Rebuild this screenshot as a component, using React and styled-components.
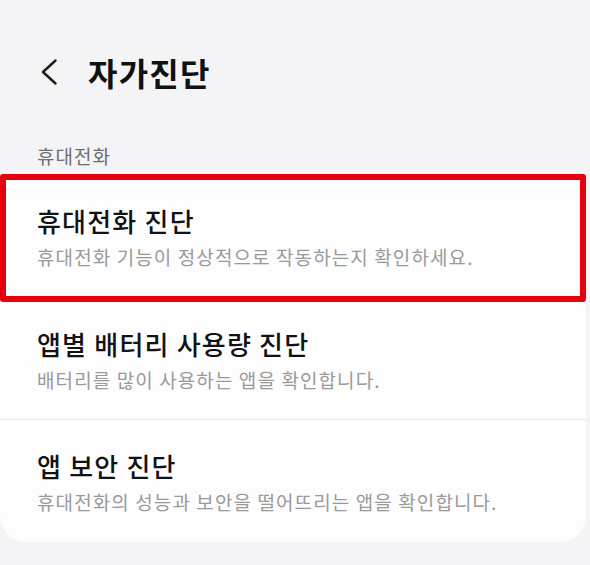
import React from 'react';
import styled, { createGlobalStyle } from 'styled-components';

const GlobalStyle = createGlobalStyle`
  html, body {
    margin: 0;
    padding: 0;
    background: #f4f4f6;
  }
  body {
    font-family: "Noto Sans CJK KR", "Noto Sans", sans-serif;
  }
`;

const Page = styled.div`
  width: 590px;
  height: 565px;
  overflow: hidden;
  background: #f4f4f6;
`;

const Header = styled.header`
  display: flex;
  align-items: center;
  gap: 31px;
  height: 56px;
  padding: 44px 0 0 41px;
`;

const BackButton = styled.button`
  display: flex;
  align-items: center;
  padding: 0;
  border: none;
  background: none;
  color: #1c1c1c;
`;

const Title = styled.h1`
  margin: 0;
  font-size: 32px;
  font-weight: 700;
  letter-spacing: 1.2px;
  color: #111;
`;

const SectionLabel = styled.div`
  margin: 45px 0 8px 37px;
  font-size: 19px;
  line-height: 22px;
  letter-spacing: 1px;
  color: #6e6e6e;
`;

const Card = styled.ul`
  list-style: none;
  margin: 0;
  padding: 0;
  width: 586px;
  background: #fdfdfe;
  border-radius: 0 0 26px 26px;
`;

const Item = styled.li`
  position: relative;
  padding: 31px 20px 28.5px 37px;
  border-top: ${p => (p.$first ? 'none' : '1.5px solid #e7e7ea')};

  &::after {
    content: '';
    display: ${p => (p.$highlight ? 'block' : 'none')};
    position: absolute;
    z-index: 1;
    inset: -1px 0 -5px 0;
    border: 6px solid #e8000d;
    border-radius: 3px;
    pointer-events: none;
  }
`;

const ItemTitle = styled.div`
  font-size: 26px;
  line-height: 30px;
  font-weight: 500;
  color: #121212;
  letter-spacing: 1.2px;
`;

const ItemDesc = styled.div`
  margin-top: 10px;
  font-size: 19px;
  line-height: 22px;
  letter-spacing: 1.1px;
  color: #9a9a9a;
`;

const items = [
  { title: '휴대전화 진단', desc: '휴대전화 기능이 정상적으로 작동하는지 확인하세요.', highlight: true },
  { title: '앱별 배터리 사용량 진단', desc: '배터리를 많이 사용하는 앱을 확인합니다.' },
  { title: '앱 보안 진단', desc: '휴대전화의 성능과 보안을 떨어뜨리는 앱을 확인합니다.' },
];

const App = () => {
  return (
    <Page>
      <GlobalStyle />
      <Header>
        <BackButton aria-label="뒤로">
          <svg width="16" height="26" viewBox="0 0 16 26" fill="none">
            <path d="M14.5 1.5 L2 13 L14.5 24.5" stroke="currentColor" strokeWidth="2.4" strokeLinecap="round" strokeLinejoin="round" />
          </svg>
        </BackButton>
        <Title>자가진단</Title>
      </Header>

      <SectionLabel>휴대전화</SectionLabel>

      <Card>
        {items.map((it, i) => (
          <Item key={it.title} $first={i === 0} $highlight={it.highlight}>
            <ItemTitle>{it.title}</ItemTitle>
            <ItemDesc>{it.desc}</ItemDesc>
          </Item>
        ))}
      </Card>
    </Page>
  );
};

export default App;
